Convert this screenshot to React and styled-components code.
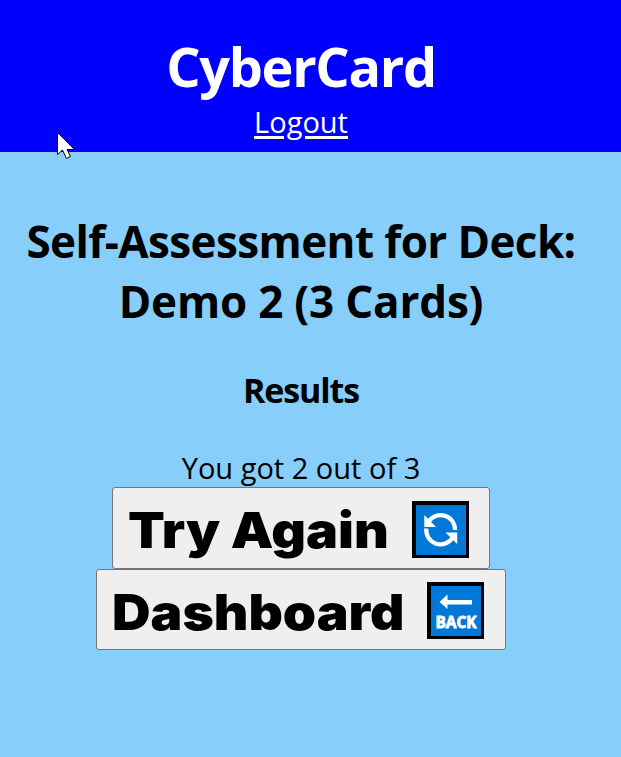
import React from 'react';
import styled, { createGlobalStyle } from 'styled-components';

const GlobalStyle = createGlobalStyle`
  * { box-sizing: border-box; }
  body {
    margin: 0;
    background: #87cefa;
    color: #000;
    font-family: "Open Sans", "Noto Sans", sans-serif;
    overflow: hidden;
  }
`;

const Page = styled.div`
  position: relative;
  min-height: 757px;
  background: #87cefa;
  text-align: center;
`;

const Header = styled.header`
  display: flex;
  flex-direction: column;
  align-items: center;
  height: 152px;
  padding: 29px 19px 0 0;
  background: #0000ff;
  color: #fff;
`;

const Brand = styled.h1`
  margin: 0;
  font-size: 54px;
  line-height: 75px;
  font-weight: 700;
  letter-spacing: -1.3px;
  white-space: nowrap;
`;

const LogoutLink = styled.a`
  color: #fff;
  font-size: 29px;
  font-weight: 400;
  line-height: 36px;
  text-decoration: underline;
  text-decoration-thickness: 3px;
  text-underline-offset: 3px;
`;

const Main = styled.main`
  display: flex;
  flex-direction: column;
  align-items: center;
  padding: 59px 19px 0 0;
`;

const DeckTitle = styled.h2`
  margin: 0;
  font-size: 44px;
  line-height: 60px;
  font-weight: 700;
  white-space: nowrap;
`;

const Line = styled.span`
  display: block;
  letter-spacing: ${({ $track }) => $track || 0}px;
`;

const ResultsTitle = styled.h3`
  margin: 36px 0 0;
  font-size: 34px;
  line-height: 46px;
  font-weight: 700;
  letter-spacing: -1.1px;
`;

const Score = styled.p`
  margin: 36px 0 0;
  height: 38px;
  font-size: 29px;
  font-weight: 400;
  line-height: 38px;
  white-space: nowrap;
`;

const ActionButton = styled.button`
  display: flex;
  align-items: center;
  justify-content: space-between;
  width: ${({ $width }) => $width}px;
  height: ${({ $height }) => $height}px;
  padding: 0 20px 0 15px;
  border: 1px solid #767676;
  border-radius: 3px;
  background: #efefef;
  color: #000;
  font-family: Inter, "Liberation Sans", sans-serif;
  font-size: 49.5px;
  font-weight: 900;
  line-height: 60px;
  white-space: nowrap;
`;

const Label = styled.span`
  transform: translateY(1.5px) scaleX(${({ $stretch }) => $stretch});
  transform-origin: left center;
`;

const Icon = styled.svg`
  display: block;
  flex: none;
  width: 57px;
  height: 57px;
  transform: translate(${({ $dx }) => $dx || 0}px, ${({ $dy }) => $dy || 0}px);
`;

const Cursor = styled.svg`
  position: absolute;
  left: 56px;
  top: 131px;
  width: 20px;
  height: 30px;
`;

function RefreshIcon() {
  return (
    <Icon viewBox="0 0 57 57" $dy={1}>
      <rect width="57" height="57" fill="#000" />
      <rect x="4" y="4" width="50" height="50" fill="#0078d7" />
      <g fill="none" stroke="#fff" strokeWidth="4.2">
        <path d="M16.5 21A14.3 14.3 0 0 1 43 29" />
        <path d="M14.3 27.5A14.3 14.3 0 0 0 41 36" />
      </g>
      <path d="M12.3 14V26H24Z" fill="#fff" />
      <path d="M45.2 43V31.5H33.5Z" fill="#fff" />
    </Icon>
  );
}

function BackIcon() {
  return (
    <Icon viewBox="0 0 57 57" $dx={-1} $dy={1}>
      <rect width="57" height="57" fill="#000" />
      <rect x="4" y="4" width="50" height="50" fill="#0078d7" />
      <path d="M12.5 20L20.5 12.5V18H45V22.5H20.5V27Z" fill="#fff" />
      <text x="8.5" y="46" textLength="41" lengthAdjust="spacingAndGlyphs" fill="#fff" stroke="#fff" strokeWidth="0.9" fontFamily="Open Sans, sans-serif" fontWeight="700" fontSize="16.5">BACK</text>
    </Icon>
  );
}

export default function App() {
  return (
    <>
      <GlobalStyle />
      <Page>
        <Header>
          <Brand>CyberCard</Brand>
          <LogoutLink href="#">Logout</LogoutLink>
        </Header>
        <Main>
          <DeckTitle>
            <Line $track={-0.6}>Self-Assessment for Deck:</Line>
            <Line $track={-0.2}>Demo 2 (3 Cards)</Line>
          </DeckTitle>
          <ResultsTitle>Results</ResultsTitle>
          <Score>You got 2 out of 3</Score>
          <ActionButton $width={378} $height={82}>
            <Label $stretch={1.085}>Try Again</Label>
            <RefreshIcon />
          </ActionButton>
          <ActionButton $width={410} $height={81}>
            <Label $stretch={1.078}>Dashboard</Label>
            <BackIcon />
          </ActionButton>
        </Main>
        <Cursor viewBox="0 0 20 30">
          <path d="M1.5 1.5V23.5L6.5 19L10.5 27.5L14.5 25.5L11 18.5H18.5Z" fill="#fff" stroke="#000" strokeWidth="1" />
        </Cursor>
      </Page>
    </>
  );
}
